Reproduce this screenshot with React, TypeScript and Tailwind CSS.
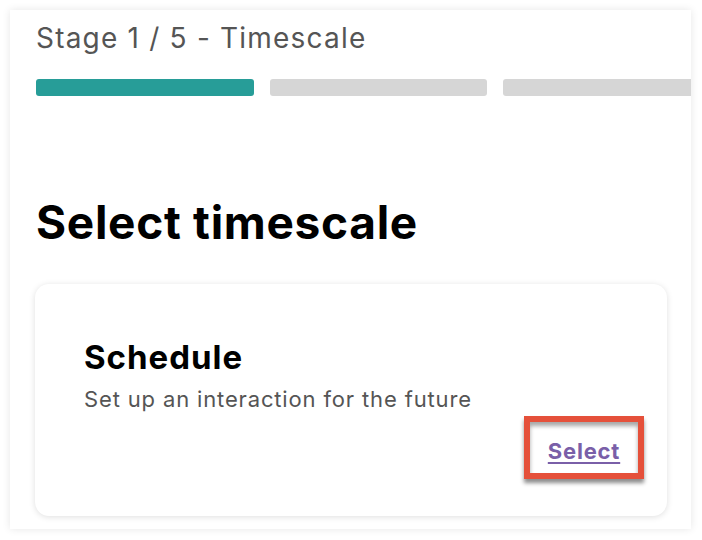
import React from "react";

const stages = ["Timescale", "Details", "Participants", "Review", "Confirm"];

const App: React.FC = () => {
  const current = 0;

  return (
    <div className="w-[702px] h-[540px] bg-white pt-[10px] pl-[10px]" style={{ fontFamily: "Inter, 'Open Sans', sans-serif" }}>
      <div className="w-[681px] h-[519px] overflow-hidden bg-white shadow-[0_0_8px_rgba(0,0,0,0.1)]">
        <div className="pl-[26px] pt-[12px]">
          <h3 className="text-[28px] leading-[32px] text-[#555555] tracking-[1.2px]">
            Stage {current + 1} / {stages.length} - {stages[current]}
          </h3>
          <div className="flex gap-4 mt-[25px]">
            {stages.map((s, i) => (
              <div
                key={s}
                className={
                  i === current
                    ? "w-[218px] h-[17px] shrink-0 rounded-[3px] bg-[#279d98]"
                    : "w-[217px] h-[17px] shrink-0 rounded-[3px] bg-[#d6d6d6]"
                }
              />
            ))}
          </div>
          <h1 className="mt-[100px] text-[46px] leading-[52px] font-bold text-black tracking-[0.7px]">Select timescale</h1>
        </div>

        <div className="ml-[25px] mt-[36px] w-[632px] h-[232px] rounded-[14px] bg-white shadow-[0_1px_6px_rgba(0,0,0,0.13)] flex flex-col">
          <div className="pl-[49px] pt-[55px]">
            <h2 className="text-[33px] leading-[36px] font-bold text-black tracking-[1px]">Schedule</h2>
            <p className="mt-[10px] text-[22px] leading-[28px] text-[#555555] tracking-[0.85px]">Set up an interaction for the future</p>
          </div>
          <div className="flex justify-end pr-[23px] mt-[3px]">
            <div className="w-[120px] h-[63px] border-[6px] border-[#e5503a] shadow-[0_4px_4px_rgba(0,0,0,0.45),inset_0_4px_4px_rgba(0,0,0,0.35)] flex items-center justify-center pt-[7px]">
              <a href="#" className="text-[22px] font-bold text-[#7a5fa8] underline underline-offset-[3px] tracking-[0.8px]">
                Select
              </a>
            </div>
          </div>
        </div>
      </div>
    </div>
  );
};

export default App;
